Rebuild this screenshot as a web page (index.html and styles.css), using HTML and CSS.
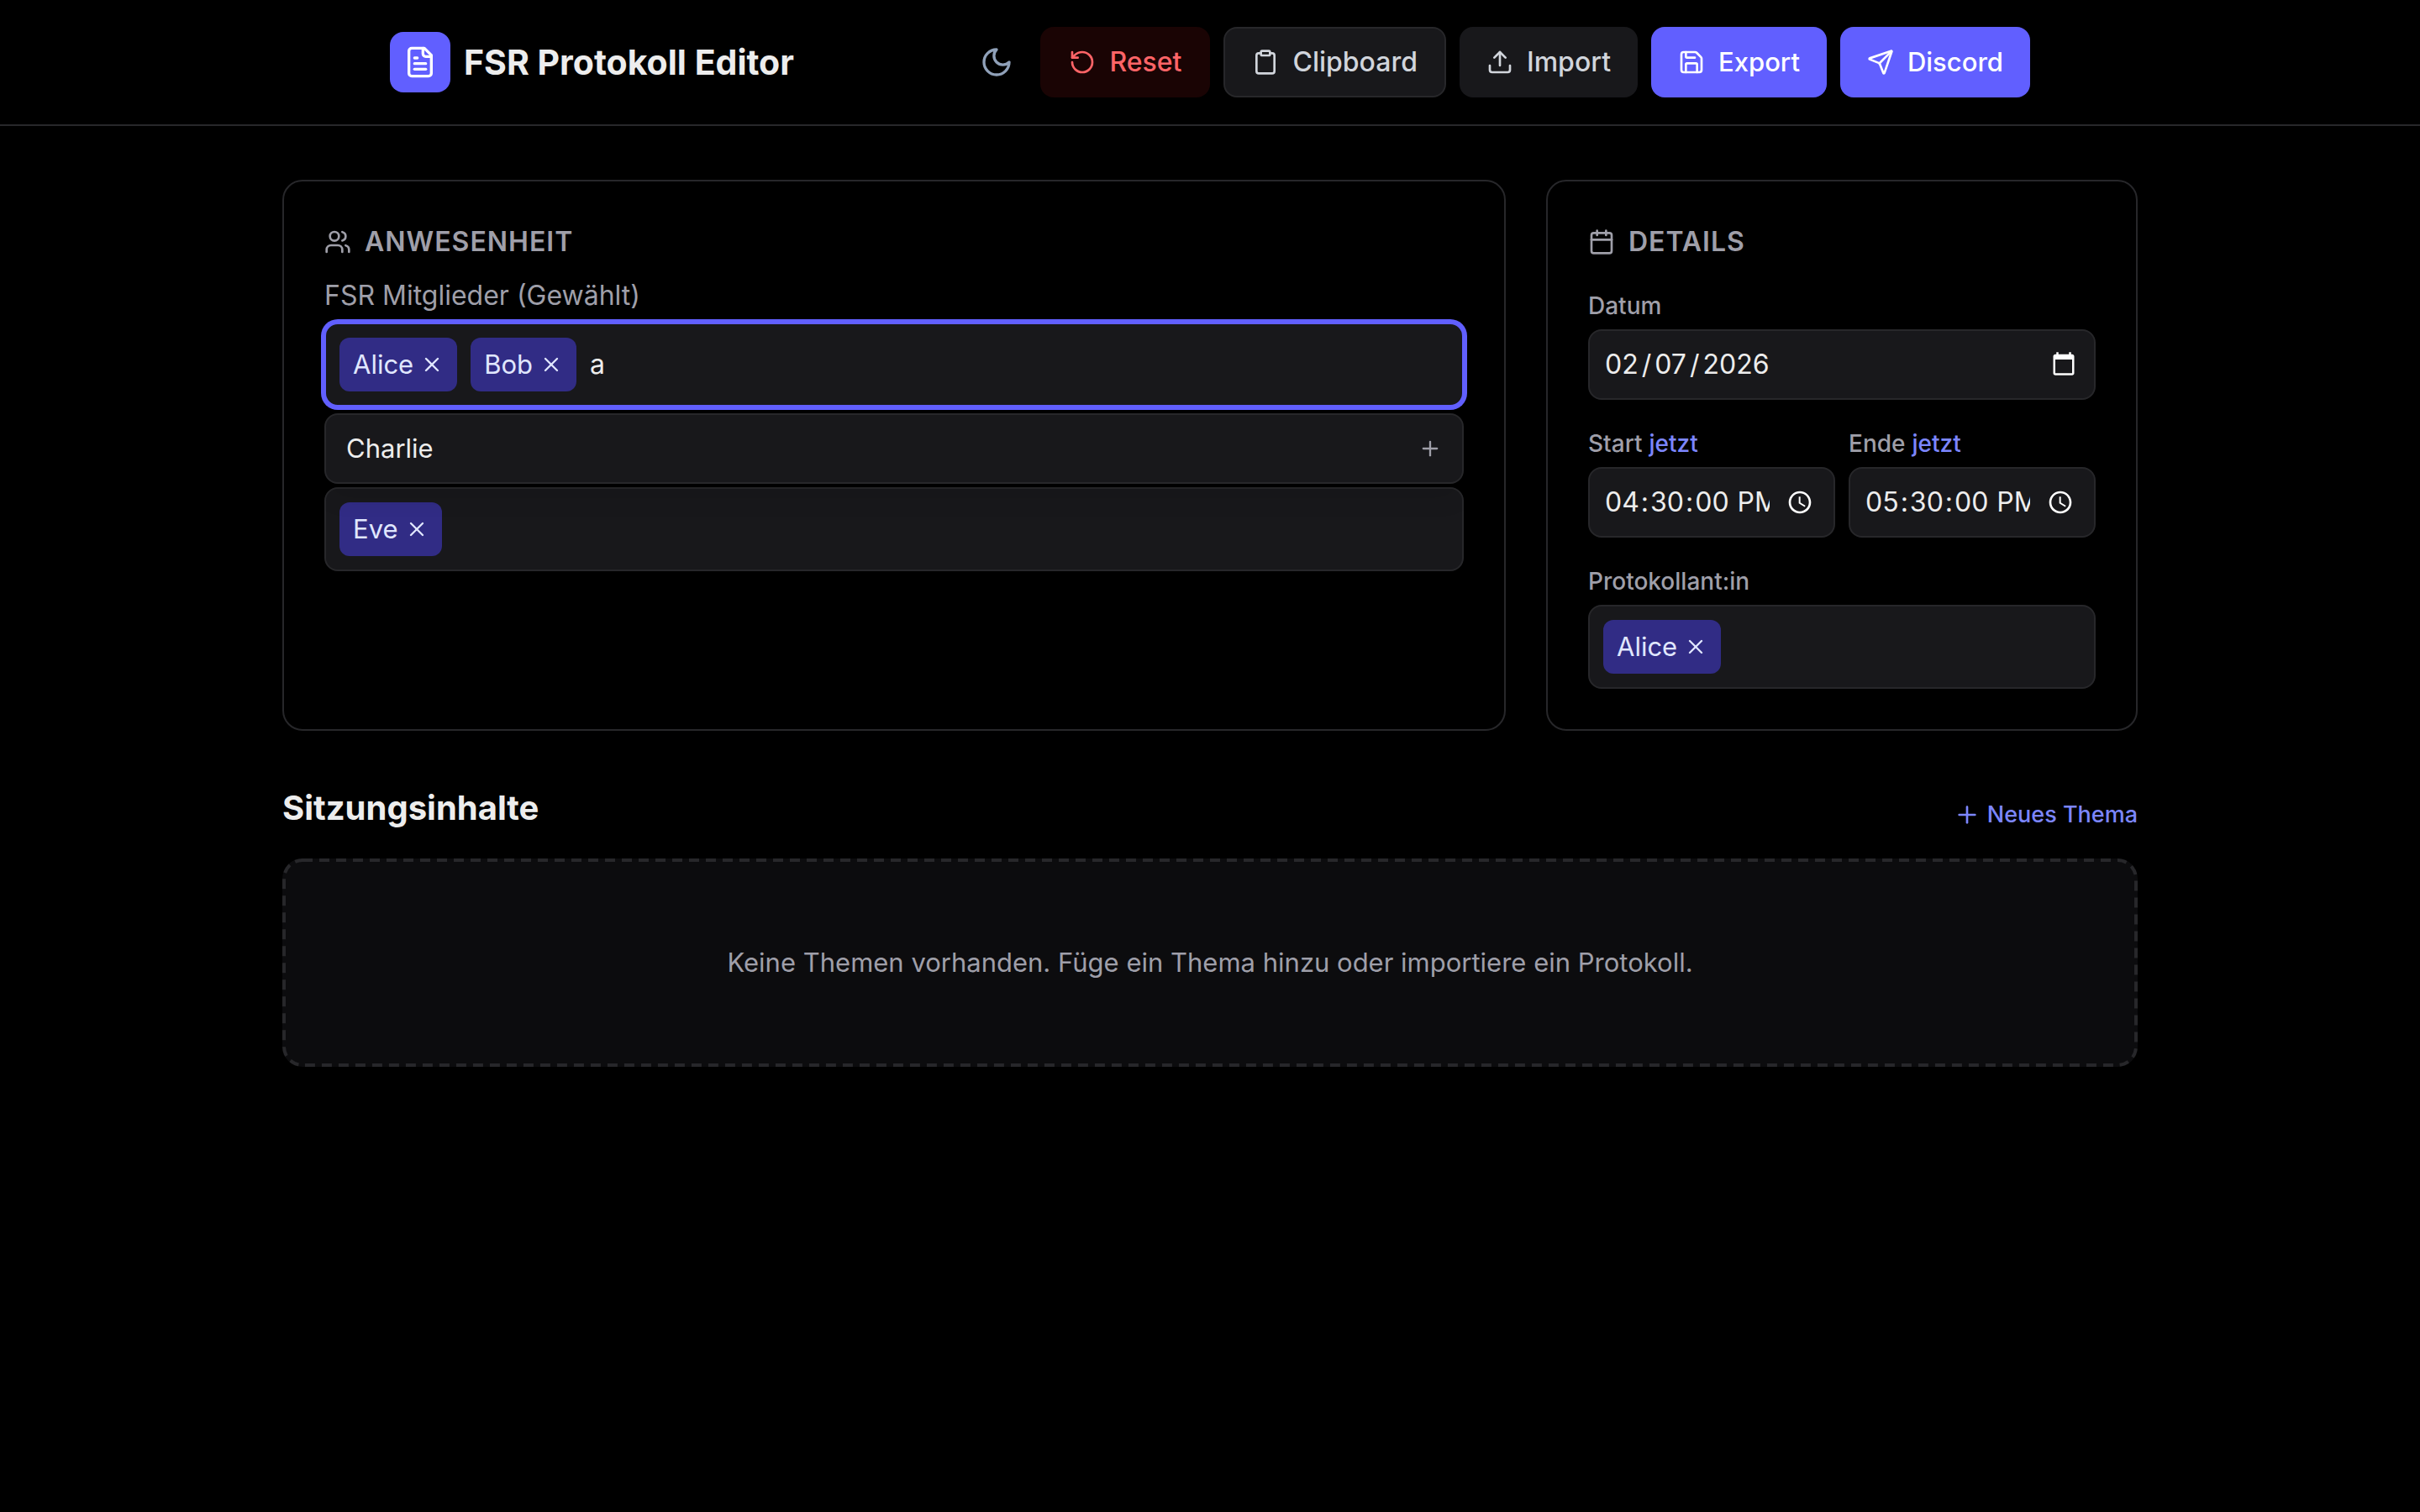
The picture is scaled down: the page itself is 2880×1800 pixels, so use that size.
FILE: index.html
```html
<!DOCTYPE html>
<html lang="de">
<head>
    <meta charset="UTF-8">
    <meta name="viewport" content="width=device-width, initial-scale=1.0">
    <title>FSR Protokoll Editor</title>
    <link rel="stylesheet" href="styles.css">
</head>
<body>
    <header class="header">
        <div class="header-inner">
            <div class="brand">
                <div class="logo">
                    <svg class="icon icon-lg" viewBox="0 0 24 24"><path d="M15 2H6a2 2 0 0 0-2 2v16a2 2 0 0 0 2 2h12a2 2 0 0 0 2-2V7Z"/><path d="M14 2v4a2 2 0 0 0 2 2h4"/><path d="M10 9H8"/><path d="M16 13H8"/><path d="M16 17H8"/></svg>
                </div>
                <h1>FSR Protokoll Editor</h1>
            </div>
            <nav class="actions">
                <button type="button" class="theme-toggle" aria-label="Dunkles Design">
                    <svg class="icon icon-lg" viewBox="0 0 24 24"><path d="M12 3a6 6 0 0 0 9 9 9 9 0 1 1-9-9Z"/></svg>
                </button>
                <button type="button" class="btn btn-danger">
                    <svg class="icon" viewBox="0 0 24 24"><path d="M3 12a9 9 0 1 0 9-9 9.75 9.75 0 0 0-6.74 2.74L3 8"/><path d="M3 3v5h5"/></svg>
                    Reset
                </button>
                <button type="button" class="btn btn-outline">
                    <svg class="icon" viewBox="0 0 24 24"><rect x="8" y="2" width="8" height="4" rx="1"/><path d="M16 4h2a2 2 0 0 1 2 2v14a2 2 0 0 1-2 2H6a2 2 0 0 1-2-2V6a2 2 0 0 1 2-2h2"/></svg>
                    Clipboard
                </button>
                <button type="button" class="btn btn-dark">
                    <svg class="icon" viewBox="0 0 24 24"><path d="M21 15v4a2 2 0 0 1-2 2H5a2 2 0 0 1-2-2v-4"/><path d="m17 8-5-5-5 5"/><path d="M12 3v12"/></svg>
                    Import
                </button>
                <button type="button" class="btn btn-primary">
                    <svg class="icon" viewBox="0 0 24 24"><path d="M15.2 3a2 2 0 0 1 1.4.6l3.8 3.8a2 2 0 0 1 .6 1.4V19a2 2 0 0 1-2 2H5a2 2 0 0 1-2-2V5a2 2 0 0 1 2-2z"/><path d="M17 21v-7a1 1 0 0 0-1-1H8a1 1 0 0 0-1 1v7"/><path d="M7 3v4a1 1 0 0 0 1 1h7"/></svg>
                    Export
                </button>
                <button type="button" class="btn btn-primary">
                    <svg class="icon" viewBox="0 0 24 24"><path d="M14.54 21.69a.5.5 0 0 0 .93-.03l6.5-19a.5.5 0 0 0-.63-.63l-19 6.5a.5.5 0 0 0-.03.94l7.93 3.18a2 2 0 0 1 1.11 1.11z"/><path d="m21.85 2.15-10.94 10.94"/></svg>
                    Discord
                </button>
            </nav>
        </div>
    </header>

    <main class="main">
        <div class="panels">
            <section class="card card-wide">
                <h2 class="card-title">
                    <svg class="icon" viewBox="0 0 24 24"><path d="M16 21v-2a4 4 0 0 0-4-4H6a4 4 0 0 0-4 4v2"/><circle cx="9" cy="7" r="4"/><path d="M22 21v-2a4 4 0 0 0-3-3.87"/><path d="M16 3.13a4 4 0 0 1 0 7.75"/></svg>
                    Anwesenheit
                </h2>
                <div class="members">
                    <div class="group">
                        <label for="members" class="group-label">FSR Mitglieder (Gewählt)</label>
                        <div class="tag-field active">
                            <span class="tag">Alice
                                <button type="button" aria-label="Alice entfernen"><svg class="icon icon-sm" viewBox="0 0 24 24"><path d="M18 6 6 18"/><path d="m6 6 12 12"/></svg></button>
                            </span>
                            <span class="tag">Bob
                                <button type="button" aria-label="Bob entfernen"><svg class="icon icon-sm" viewBox="0 0 24 24"><path d="M18 6 6 18"/><path d="m6 6 12 12"/></svg></button>
                            </span>
                            <input type="text" id="members" value="a" autocomplete="off">
                        </div>
                        <div class="suggestions">
                            <button type="button" class="suggestion">
                                Charlie
                                <svg class="icon icon-sm" viewBox="0 0 24 24"><path d="M5 12h14"/><path d="M12 5v14"/></svg>
                            </button>
                        </div>
                    </div>
                    <div class="group">
                        <div class="group-label"></div>
                        <div class="tag-field">
                            <span class="tag">Eve
                                <button type="button" aria-label="Eve entfernen"><svg class="icon icon-sm" viewBox="0 0 24 24"><path d="M18 6 6 18"/><path d="m6 6 12 12"/></svg></button>
                            </span>
                            <input type="text" id="guests" aria-label="Gäste" autocomplete="off">
                        </div>
                    </div>
                </div>
            </section>

            <section class="card">
                <h2 class="card-title">
                    <svg class="icon" viewBox="0 0 24 24"><path d="M8 2v4"/><path d="M16 2v4"/><rect x="3" y="4" width="18" height="18" rx="2"/><path d="M3 10h18"/></svg>
                    Details
                </h2>
                <div class="details">
                    <div class="group">
                        <div class="field-label"><label for="date">Datum</label></div>
                        <input type="date" id="date" class="field" value="2026-02-07">
                    </div>
                    <div class="times">
                        <div class="group">
                            <div class="field-label">
                                <label for="start">Start</label>
                                <button type="button" class="now">jetzt</button>
                            </div>
                            <input type="time" id="start" class="field field-time" step="1" value="16:30:00">
                        </div>
                        <div class="group">
                            <div class="field-label">
                                <label for="end">Ende</label>
                                <button type="button" class="now">jetzt</button>
                            </div>
                            <input type="time" id="end" class="field field-time" step="1" value="17:30:00">
                        </div>
                    </div>
                    <div class="group">
                        <div class="field-label"><label for="author">Protokollant:in</label></div>
                        <div class="tag-field">
                            <span class="tag">Alice
                                <button type="button" aria-label="Alice entfernen"><svg class="icon icon-sm" viewBox="0 0 24 24"><path d="M18 6 6 18"/><path d="m6 6 12 12"/></svg></button>
                            </span>
                            <input type="text" id="author" autocomplete="off">
                        </div>
                    </div>
                </div>
            </section>
        </div>

        <section class="topics">
            <div class="topics-head">
                <h2>Sitzungsinhalte</h2>
                <button type="button" class="add-topic">
                    <svg class="icon" viewBox="0 0 24 24"><path d="M5 12h14"/><path d="M12 5v14"/></svg>
                    Neues Thema
                </button>
            </div>
            <p class="empty">Keine Themen vorhanden. Füge ein Thema hinzu oder importiere ein Protokoll.</p>
        </section>
    </main>
</body>
</html>
```
FILE: styles.css
```css
* {
    box-sizing: border-box;
}
body {
    margin: 0;
    background: #000;
    color: #ededed;
    color-scheme: dark;
    font-family: Inter, "Liberation Sans", sans-serif;
    font-size: 32px;
    line-height: 48px;
}
h1, h2, p {
    margin: 0;
}
button, input {
    font: inherit;
    color: inherit;
}
button {
    padding: 0;
    border: none;
    background: none;
    cursor: pointer;
}

/* icons */
.icon {
    display: block;
    flex: none;
    width: 32px;
    height: 32px;
    fill: none;
    stroke: currentColor;
    stroke-width: 2;
    stroke-linecap: round;
    stroke-linejoin: round;
}
.icon-sm {
    width: 28px;
    height: 28px;
}
.icon-lg {
    width: 40px;
    height: 40px;
}

/* header */
.header {
    border-bottom: 2px solid #27272a;
}
.header-inner {
    display: flex;
    align-items: center;
    justify-content: space-between;
    max-width: 2048px;
    margin: 0 auto;
    padding: 32px 48px;
}
.brand {
    display: flex;
    align-items: center;
    gap: 16px;
}
.logo {
    padding: 16px;
    border-radius: 16px;
    background: #615fff;
    color: #fff;
}
h1 {
    font-size: 41px;
    font-weight: 700;
    line-height: 56px;
}
.actions {
    display: flex;
    align-items: stretch;
    gap: 16px;
}
.theme-toggle {
    padding: 16px;
    color: #90a1b9;
}
.btn {
    display: flex;
    align-items: center;
    gap: 16px;
    padding: 16px 32px;
    border-radius: 16px;
    font-weight: 500;
}
.btn-danger {
    border: 2px solid transparent;
    background: #1a0404;
    color: #ff6467;
}
.btn-outline {
    border: 2px solid #27272a;
    background: #18181b;
    color: #d1d5dc;
}
.btn-dark {
    background: #18181b;
    color: #d1d5dc;
}
.btn-primary {
    background: #615fff;
    color: #fff;
    font-size: 31px;
}

/* cards */
.main {
    max-width: 2304px;
    margin: 0 auto;
    padding: 64px 48px;
}
.panels {
    display: grid;
    grid-template-columns: repeat(3, minmax(0, 1fr));
    gap: 48px;
}
.card {
    padding: 48px;
    border: 2px solid #27272a;
    border-radius: 24px;
}
.card-wide {
    grid-column: span 2;
}
.card-title {
    display: flex;
    align-items: center;
    gap: 16px;
    color: #9f9fa9;
    font-size: 32px;
    font-weight: 600;
    letter-spacing: 1px;
    text-transform: uppercase;
}
.members {
    display: flex;
    flex-direction: column;
    gap: 40px;
    margin-top: 16px;
}
.details {
    display: flex;
    flex-direction: column;
    gap: 32px;
    margin-top: 32px;
}
.times {
    display: grid;
    grid-template-columns: 1fr 1fr;
    gap: 16px;
}
.group {
    position: relative;
    display: flex;
    flex-direction: column;
    gap: 8px;
    min-width: 0;
}
.group-label {
    min-height: 48px;
    color: #9f9fa9;
}
.field-label {
    display: flex;
    gap: 8px;
    color: #9f9fa9;
    font-size: 28px;
    font-weight: 500;
    line-height: 40px;
}
.now {
    color: #7c86ff;
}

/* fields */
.field, .tag-field, .suggestion {
    border: 2px solid #27272a;
    border-radius: 16px;
    background: #18181b;
}
.field {
    width: 100%;
    height: 84px;
    padding: 16px;
}
.field::-webkit-datetime-edit {
    padding: 0 1px;
}
.field::-webkit-datetime-edit-text {
    padding: 0 3px;
}
.field::-webkit-calendar-picker-indicator {
    width: 32px;
    height: 32px;
    margin-left: 16px;
    padding: 4px;
}
.field-time::-webkit-datetime-edit-text {
    padding: 0 1px;
}
.field-time::-webkit-calendar-picker-indicator {
    margin-right: 4px;
}
.tag-field {
    display: flex;
    gap: 16px;
    padding: 16px;
}
.tag-field.active {
    border-color: #615fff;
    box-shadow: 0 0 0 4px #615fff;
}
.tag-field input {
    flex: 1;
    min-width: 0;
    padding: 0;
    border: none;
    outline: none;
    background: none;
}
.tag {
    display: flex;
    align-items: center;
    gap: 8px;
    padding: 8px 16px;
    border-radius: 12px;
    background: #312c85;
    color: #e0e7ff;
    font-size: 31px;
}
/* opens over the next group */
.suggestions {
    position: absolute;
    top: 100%;
    left: 0;
    right: 0;
    z-index: 1;
    margin-top: 8px;
    border-radius: 16px;
    box-shadow: 0 20px 30px -6px rgba(0, 0, 0, 0.1);
}
.suggestion {
    display: flex;
    align-items: center;
    justify-content: space-between;
    width: 100%;
    padding: 16px 24px;
    font-size: 31px;
}
.suggestion .icon {
    color: #9f9fa9;
}

/* topics */
.topics {
    margin-top: 64px;
}
.topics-head {
    display: flex;
    align-items: flex-end;
    justify-content: space-between;
    margin-bottom: 32px;
}
.topics-head h2 {
    font-size: 40px;
    font-weight: 700;
    line-height: 56px;
}
.add-topic {
    display: flex;
    align-items: center;
    gap: 8px;
    color: #7c86ff;
    font-size: 27px;
    font-weight: 500;
    line-height: 40px;
}
/* dashed frame, half of the stroke is cut off at the edge */
.empty {
    padding: 100px 48px;
    border-radius: 24px;
    background: #0c0c0e url("data:image/svg+xml,%3Csvg xmlns='http://www.w3.org/2000/svg' width='100%25' height='100%25'%3E%3Crect width='100%25' height='100%25' rx='24' fill='none' stroke='%2327272a' stroke-width='8' stroke-dasharray='12 8'/%3E%3C/svg%3E");
    color: #9f9fa9;
    font-size: 31px;
    text-align: center;
}
```
